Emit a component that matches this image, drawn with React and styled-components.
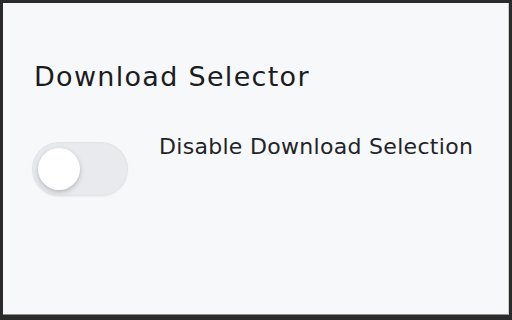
import React from 'react';
import styled, { createGlobalStyle } from 'styled-components';

const Global = createGlobalStyle`
  html, body {
    margin: 0;
    padding: 0;
    background: #2a2a2a;
  }
  body {
    font-family: "DejaVu Sans", "Noto Sans", sans-serif;
  }
`;

const Frame = styled.div`
  width: 512px;
  height: 320px;
  box-sizing: border-box;
  padding: 3px 3px 5px 3px;
  background: #2b2b2b;
`;

const Panel = styled.div`
  height: 100%;
  box-sizing: border-box;
  background: #f7f8fa;
  border-right: 1px solid #c9cacc;
  border-bottom: 1px solid #8e8f91;
  padding: 57px 0 0 29px;
`;

const Title = styled.h1`
  margin: 0 0 0 2px;
  font-size: 27px;
  font-weight: 400;
  letter-spacing: 1.3px;
  color: #1b1c1e;
  line-height: 33px;
`;

const Row = styled.div`
  display: flex;
  align-items: flex-start;
  gap: 31px;
  margin-top: 41px;
`;

const Track = styled.div`
  width: 96px;
  height: 54px;
  border-radius: 27px;
  background: #e9eaed;
  box-shadow: inset 0 0 3px rgba(0, 0, 0, 0.06), 0 1px 2px rgba(0, 0, 0, 0.06);
  display: flex;
  align-items: center;
  padding: 0 6px;
  box-sizing: border-box;
  margin-top: 8px;
`;

const Knob = styled.div`
  width: 42px;
  height: 42px;
  border-radius: 50%;
  background: #ffffff;
  box-shadow: 0 2px 5px rgba(0, 0, 0, 0.22);
`;

const Label = styled.div`
  font-size: 22px;
  letter-spacing: 0.3px;
  color: #222427;
  line-height: 26px;
`;

export default function App() {
  return (
    <>
      <Global />
      <Frame>
        <Panel>
          <Title>Download Selector</Title>
          <Row>
            <Track>
              <Knob />
            </Track>
            <Label>Disable Download Selection</Label>
          </Row>
        </Panel>
      </Frame>
    </>
  );
}
